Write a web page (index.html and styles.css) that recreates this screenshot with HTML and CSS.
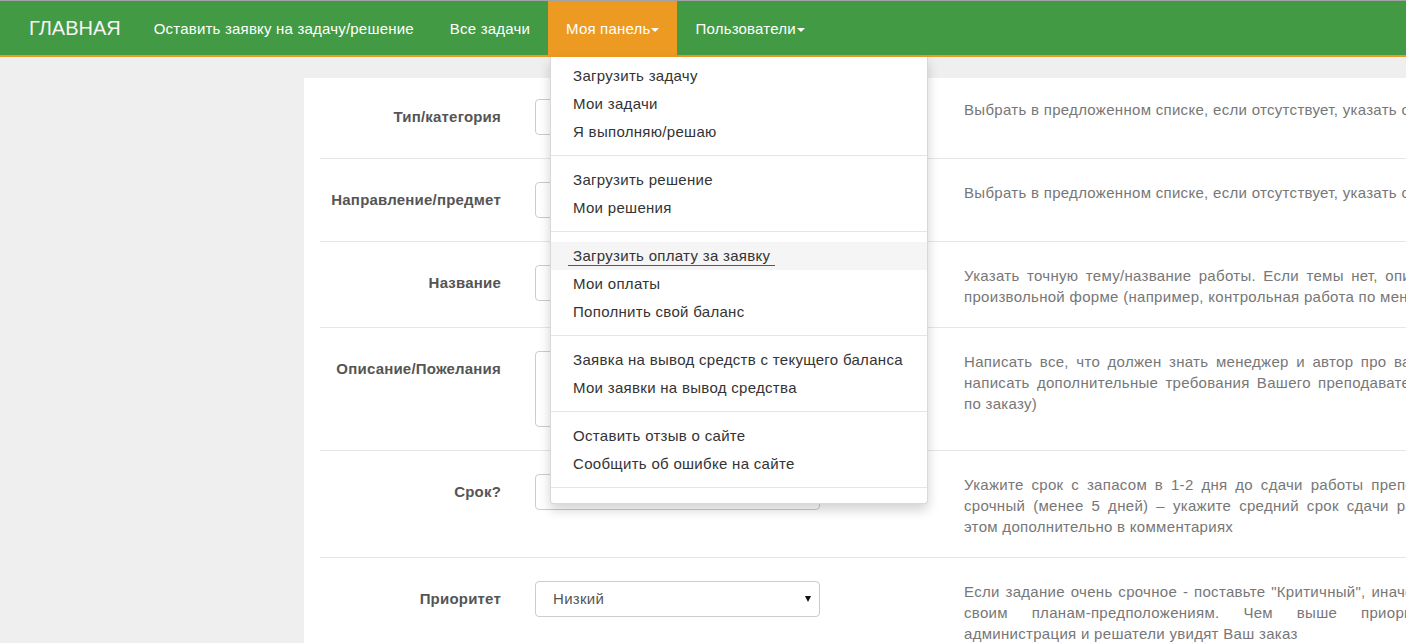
FILE: index.html
```html
<!DOCTYPE html>
<html lang="ru">
<head>
<meta charset="utf-8">
<title>Моя панель</title>
<link rel="stylesheet" href="styles.css">
</head>
<body>
<nav class="navbar">
  <a class="brand" href="#">ГЛАВНАЯ</a>
  <ul class="nav">
    <li><a href="#">Оставить заявку на задачу/решение</a></li>
    <li><a href="#">Все задачи</a></li>
    <li class="open"><a href="#">Моя панель<span class="caret"></span></a>
      <ul class="dropdown">
        <li><a href="#">Загрузить задачу</a></li>
        <li><a href="#">Мои задачи</a></li>
        <li><a href="#">Я выполняю/решаю</a></li>
        <li class="divider"></li>
        <li><a href="#">Загрузить решение</a></li>
        <li><a href="#">Мои решения</a></li>
        <li class="divider"></li>
        <li class="hover"><a href="#"><span class="mark">Загрузить оплату за заявку</span></a></li>
        <li><a href="#">Мои оплаты</a></li>
        <li><a href="#">Пополнить свой баланс</a></li>
        <li class="divider"></li>
        <li><a href="#">Заявка на вывод средств с текущего баланса</a></li>
        <li><a href="#">Мои заявки на вывод средства</a></li>
        <li class="divider"></li>
        <li><a href="#">Оставить отзыв о сайте</a></li>
        <li><a href="#">Сообщить об ошибке на сайте</a></li>
        <li class="divider"></li>
      </ul>
    </li>
    <li><a href="#">Пользователи<span class="caret"></span></a></li>
  </ul>
</nav>

<main class="page">
  <form class="panel">
    <div class="row">
      <label class="label">Тип/категория</label>
      <div class="control"><div class="input"></div></div>
      <p class="desc"><span class="ln last">Выбрать в предложенном списке, если отсутствует, указать свой</span></p>
    </div>
    <div class="row">
      <label class="label">Направление/предмет</label>
      <div class="control"><div class="input"></div></div>
      <p class="desc"><span class="ln last">Выбрать в предложенном списке, если отсутствует, указать свой</span></p>
    </div>
    <div class="row">
      <label class="label">Название</label>
      <div class="control"><div class="input"></div></div>
      <p class="desc"><span class="ln">Указать точную тему/название работы. Если темы нет, опишите ее в</span><span class="ln last">произвольной форме (например, контрольная работа по менеджменту)</span></p>
    </div>
    <div class="row">
      <label class="label">Описание/Пожелания</label>
      <div class="control"><div class="input textarea"></div></div>
      <p class="desc"><span class="ln">Написать все, что должен знать менеджер и автор про вашу работу</span><span class="ln">написать дополнительные требования Вашего преподавателя и ваши</span><span class="ln last">по заказу)</span></p>
    </div>
    <div class="row">
      <label class="label">Срок?</label>
      <div class="control"><div class="input"></div></div>
      <p class="desc"><span class="ln">Укажите срок с запасом в 1-2 дня до сдачи работы преподавателю.</span><span class="ln">срочный (менее 5 дней) – укажите средний срок сдачи работы, обо</span><span class="ln last">этом дополнительно в комментариях</span></p>
    </div>
    <div class="row">
      <label class="label">Приоритет</label>
      <div class="control"><div class="select">Низкий<span class="arrow"></span></div></div>
      <p class="desc"><span class="ln">Если задание очень срочное - поставьте "Критичный", иначе выбор по</span><span class="ln">своим планам-предположениям. Чем выше приоритет, тем</span><span class="ln last">администрация и решатели увидят Ваш заказ</span></p>
    </div>
  </form>
</main>
</body>
</html>
```
FILE: styles.css
```css
* { box-sizing: border-box; }
html, body { margin: 0; padding: 0; }
body {
  background: #efefef;
  font-family: "Liberation Sans", Arial, sans-serif;
  font-size: 15px;
  letter-spacing: 0.3px;
  line-height: 20px;
  color: #333;
  overflow: hidden;
  height: 643px;
}
a { text-decoration: none; color: inherit; }

.navbar {
  display: flex;
  align-items: stretch;
  height: 57px;
  background: #439a45;
  border-top: 1px solid #a3a3a3;
  border-bottom: 2px solid #ec9a21;
  padding-left: 14px;
  position: relative;
  z-index: 10;
}
.brand {
  padding: 0 15px;
  line-height: 55px;
  font-size: 20px;
  letter-spacing: 0;
  color: #f4f4f4;
}
.nav {
  list-style: none;
  margin: 0;
  padding: 0;
  display: flex;
  letter-spacing: 0.2px;
}
.nav > li { position: relative; }
.nav > li > a {
  display: block;
  padding: 0 18px;
  line-height: 55px;
  color: #fff;
}
.nav > li.open > a { background: #ec9a21; }
.caret {
  display: inline-block;
  width: 0;
  height: 0;
  margin-left: 1px;
  vertical-align: middle;
  border-top: 4px solid #fff;
  border-left: 4px solid transparent;
  border-right: 4px solid transparent;
}

.dropdown {
  position: absolute;
  top: 56px;
  left: 2px;
  width: 378px;
  margin: 0;
  padding: 5px 0;
  list-style: none;
  background: #fff;
  border: 1px solid rgba(0,0,0,.15);
  border-top: 0;
  border-radius: 0 0 4px 4px;
  box-shadow: 0 6px 12px rgba(0,0,0,.175);
  letter-spacing: 0.3px;
}
.dropdown li a {
  display: block;
  padding: 4px 22px;
  line-height: 20px;
  color: #333;
  white-space: nowrap;
}
.dropdown li.hover a { background: #f5f5f5; }
.dropdown .divider {
  height: 1px;
  margin: 9px 0 10px;
  background: #e5e5e5;
}
.mark {
  display: inline-block;
  margin-left: -5px;
  padding: 0 5px;
  line-height: 18px;
  border-bottom: 1px solid #d9231d;
}

.page {
  padding: 21px 0 0 304px;
}
.panel {
  background: #fff;
  padding-left: 16px;
  width: 1300px;
  min-height: 600px;
  margin: 0;
}
.row {
  display: grid;
  grid-template-columns: 181px 395px 524px;
  column-gap: 34px;
  align-items: start;
  padding: 23px 0 20px;
  border-top: 1px solid #e6e6e6;
}
.row:first-child { border-top: 0; padding-top: 21px; }
.label {
  display: block;
  text-align: right;
  font-weight: bold;
  color: #555;
  padding-top: 8px;
  line-height: 20px;
  letter-spacing: 0.2px;
}
.control { width: 285px; padding-bottom: 3px; }
.input, .select {
  height: 36px;
  border: 1px solid #ccc;
  border-radius: 4px;
  background: #fff;
}
.textarea { height: 76px; }
.select {
  position: relative;
  padding-left: 17px;
  line-height: 34px;
  color: #555;
}
.arrow {
  position: absolute;
  right: 8px;
  top: 14px;
  border-top: 6px solid #111;
  border-left: 3px solid transparent;
  border-right: 3px solid transparent;
}
.desc {
  margin: 0;
  color: #777;
  line-height: 21px;
  text-align: justify;
}
.desc .ln { display: block; text-align-last: justify; white-space: nowrap; }
.desc .ln.last { text-align-last: left; }
```
